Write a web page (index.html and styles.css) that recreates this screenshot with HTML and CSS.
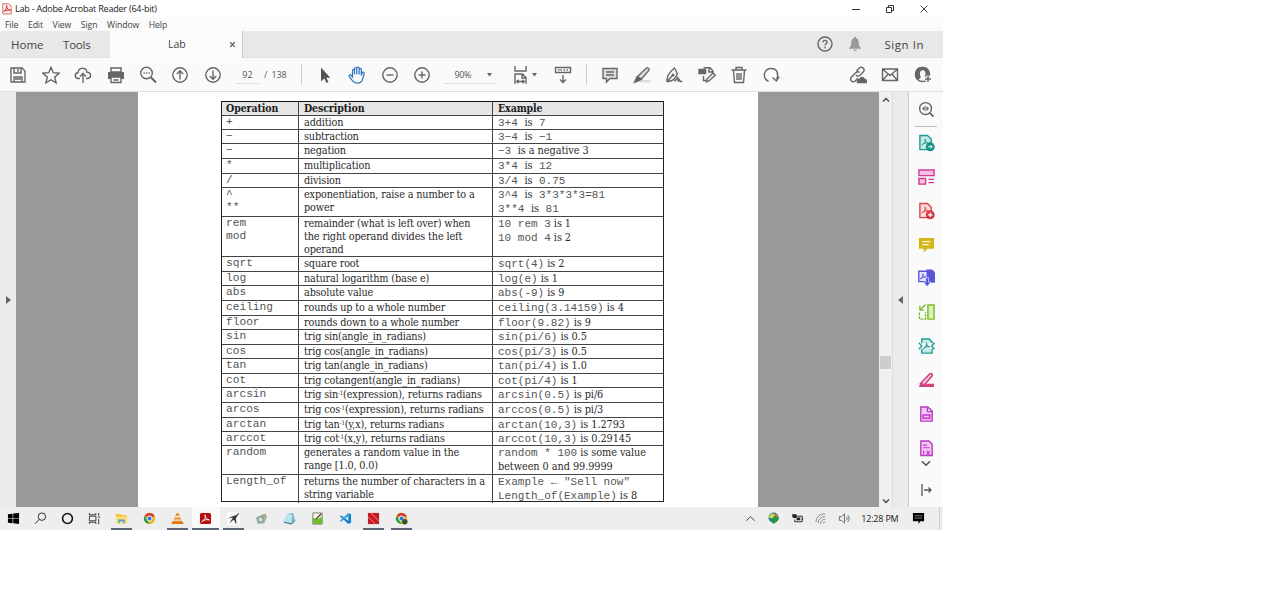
FILE: index.html
```html
<!DOCTYPE html>
<html lang="en">
<head>
<meta charset="utf-8">
<title>Lab - Adobe Acrobat Reader (64-bit)</title>
<link rel="stylesheet" href="styles.css">
</head>
<body>
<div class="window">
  <header class="titlebar">
    <svg class="app-icon" width="10" height="12" viewBox="0 0 10 12"><path d="M.8.8h6L9.200 3v8H.8z" fill="#fff4f4" stroke="#d86a6a"/><path d="M2 8.500C4 7 5 4 4.600 2.500 4.800 5.500 6 7 8.500 7.200 6 6.800 4 7.300 2 8.500z" fill="none" stroke="#d32626"/></svg>
    <span class="title">Lab - Adobe Acrobat Reader (64-bit)</span>
    <div class="controls">
      <svg width="10" height="10" viewBox="0 0 10 10"><path d="M1 5.500h8" stroke="#333"/></svg>
      <svg width="10" height="10" viewBox="0 0 10 10" fill="none" stroke="#333"><path d="M1.500 3.500h5v5h-5zM3.500 3V1.500h5v5H7"/></svg>
      <svg width="10" height="10" viewBox="0 0 10 10" stroke="#333" stroke-width=".9"><path d="M1.500 1.500l7 7m0-7l-7 7"/></svg>
    </div>
  </header>
  <nav class="menubar"><span>File</span><span>Edit</span><span>View</span><span>Sign</span><span>Window</span><span>Help</span></nav>
  <div class="tabs">
    <span class="home">Home</span><span class="tools">Tools</span>
    <div class="tab"><span>Lab</span><svg width="7" height="7" viewBox="0 0 7 7" stroke="#555" stroke-width="1.200"><path d="M1.200 1.200l4.600 4.600m0-4.600L1.200 5.800"/></svg></div>
    <div class="account">
      <svg width="16" height="16" viewBox="0 0 16 16" fill="none" stroke="#666" stroke-width="1.400"><circle cx="8" cy="8" r="7"/><path d="M6 6.300c0-2.600 4-2.600 4 0C10 7.700 8 7.700 8 9.500M8 10.800v1.400"/></svg>
      <svg class="bell" width="14" height="16" viewBox="0 0 14 16" fill="#999"><path d="M7 .8c.8 0 1 .5 1 1.200 2 .7 2.700 2 2.700 4.500 0 3 .5 4 2.300 5.500v.8H1V12c1.800-1.500 2.300-2.500 2.300-5.500C3.300 4 4 2.700 6 2 6 1.300 6.200.8 7 .8zM5 13.800h4c-.5 1.600-3.500 1.600-4 0z"/></svg>
      <span>Sign In</span>
    </div>
  </div>
  <div class="toolbar">
    <div class="group first">
      <svg viewBox="0 0 18 18"><path d="M2 2h11l3 3v11H2zM5 2v5h7V2M5 16v-5h8v5M6 13h6"/><path d="M9 3v3"/></svg>
      <svg viewBox="0 0 18 18"><path d="M9 1.300l2.300 5.400 5.900.5-4.500 3.900 1.400 5.700L9 13.700l-5.100 3.100 1.400-5.700L.8 7.200l5.900-.5z"/></svg>
      <svg viewBox="0 0 18 18"><path d="M6 12.500H4.500C.3 12.500.2 7 4 6.700 4.500 1 12 .9 13 6.200c5 .1 4.600 6.300 0 6.300h-1M9 17V8M6 10.500l3-3 3 3"/></svg>
      <svg viewBox="0 0 18 18"><path d="M4 2h10v4H4zM4 11h10v5.500H4zM6.500 14h5"/><path d="M1 6h16v7h-3v-2H4v2H1z" fill="#666" stroke="none"/></svg>
      <svg viewBox="0 0 18 18"><circle cx="7.500" cy="7" r="5.800"/><path d="M11.800 11.300L17 16.500" stroke-width="2"/><path d="M4.500 7h1.300M7 7h1.200M9.500 7h1.200"/></svg>
      <svg viewBox="0 0 18 18"><circle cx="9" cy="9" r="7.200"/><path d="M9 13.500V5M5.800 8L9 4.800 12.200 8"/></svg>
      <svg viewBox="0 0 18 18"><circle cx="9" cy="9" r="7.200"/><path d="M9 4.500V13M5.800 10L9 13.200l3.200-3.200"/></svg>
    </div>
    <span class="page-field">92</span><span class="page-count">/&nbsp; 138</span>
    <i class="divider"></i>
    <div class="group pointers">
      <svg viewBox="0 0 18 18"><path d="M5 1.500v14l3.300-3 2.200 4.500 2-1-2.200-4.300h4z" fill="#555" stroke="none"/></svg>
      <svg viewBox="0 0 18 18" class="blue"><path d="M4.500 11V4.500c0-1.500 2-1.500 2 0V8.500 2.700c0-1.600 2.300-1.600 2.300 0V8.300 2.200c0-1.600 2.300-1.600 2.300 0V8.500 3.500c0-1.400 2.200-1.400 2.200 0v6l.7-2.500c.5-1.500 2.500-.9 2.200.5l-1.700 6c-.8 2.500-2.500 3.700-5 3.700-2 0-3.700-.7-5-2.600L1.300 10.800c-.9-1.500 1-2.500 2-1.300L5 11.600"/></svg>
      <svg viewBox="0 0 18 18"><circle cx="9" cy="9" r="7.200"/><path d="M5.500 9h7"/></svg>
      <svg viewBox="0 0 18 18"><circle cx="9" cy="9" r="7.200"/><path d="M5.500 9h7M9 5.500v7"/></svg>
    </div>
    <span class="zoom-field">90%<b class="caret"></b></span>
    <svg class="fit" viewBox="0 0 18 18"><path d="M3 0v5h11V0M3 18V8h7.500L14 11.500V18M10 8v4h4M5 15.500h7M6.500 13.800L4.800 15.500l1.700 1.700M10.500 13.800l1.700 1.700-1.700 1.700"/></svg><b class="caret"></b>
    <svg class="keys" viewBox="0 0 18 18"><path d="M1.500 1.500h15v5h-15zM4 4h1.500m1 0H8m1.500 0H11m1.500 0H14M9 9v7.500M6 13.500l3 3 3-3"/></svg>
    <i class="divider"></i>
    <div class="group edit">
      <svg viewBox="0 0 18 18"><path d="M2 2.500h14v10H9l-3.500 3.500v-3.500H2z" fill="#ddd"/><path d="M5 6h8M5 9h8"/></svg>
      <svg viewBox="0 0 18 18"><path d="M8 14h9.500v2.500H6z" fill="#ddd" stroke="none"/><path d="M4.500 10.500L13.500 2c1-.8 3.200.9 2.500 2.200L8.500 13z" fill="#ddd"/><path d="M4 11l4 2.500-2 1-4.500 1.700z" fill="#666"/></svg>
      <svg viewBox="0 0 18 18"><path d="M2 15.500C1.500 11 4 6.500 9.500 2l2.800 5.500C11 13 8 15.300 2 15.500zM2 15.500l5.500-6"/><circle cx="8" cy="9" r=".8"/><path d="M9.500 15.500l3.500-4c.8.500-.7 3.700.5 3.500l1-1.200.8 1.700h2"/></svg>
      <svg viewBox="0 0 18 18"><path d="M5.500 1.700H12L15 5v2M5.500 10v4.500H8M11 2v4h4M8.500 16l.5-3 6-6 2.200 2-6.200 6z"/><path d="M1 3.500h6.500v4H1z" fill="#666"/></svg>
      <svg viewBox="0 0 18 18"><path d="M1.500 4h15M6 3.500v-2h6v2M3.500 4.500l1 12h9l1-12M7 7v7M9 7v7M11 7v7"/></svg>
      <svg viewBox="0 0 18 18"><path d="M6.500 15.300C-.5 12 2 2.500 9.200 2.500c6.300 0 7.800 6 5.300 11"/><path d="M10.500 11.500l4 3.500 2.700-4.500"/></svg>
    </div>
    <div class="group share">
      <svg viewBox="0 0 18 18"><path d="M7.500 5L10 2.300c3-2.800 6.700 1 4.200 3.700L11 9.300c-1.500 1.200-3 1-4-.3M10.500 6.500c-1.200-1-2.700-.7-4 .5L2.500 11c-2.500 2.800 1 6.500 4 3.700L9 12"/><path d="M8.500 16.500c-.3-2.500 1.200-3 2-3 1-3 4.500-2.500 5 0 2 0 2.500 2 1.800 3z" fill="#666"/></svg>
      <svg viewBox="0 0 18 18"><path d="M1.500 3h15v11.500h-15zL9 9.500 16.500 3M1.500 14.500L6.700 8.500M16.500 14.500l-5.200-6"/></svg>
      <svg viewBox="0 0 18 18"><circle cx="8.500" cy="8.500" r="7"/><path d="M3 13C0 8 2 1.500 8.500 1.500c6 0 8 6 5.500 9l-2.300-.5c3-8.500-9-8.500-6 0 .8 1.500.3 2-2.700 3z" fill="#666"/><path d="M14 9.500v7M10.500 13h7" stroke="#fafafa" stroke-width="3.500"/><path d="M14 10v6M11 13h6"/></svg>
    </div>
  </div>
  <main class="workspace">
    <aside class="left-rail"><i class="tri right"></i></aside>
    <section class="canvas">
      <article class="sheet">
        <div class="ops">
          <div class="row head"><p>Operation</p><p>Description</p><p>Example</p></div>
          <div class="row"><code>+</code><p>addition</p><code>3+4 <q>is</q> 7</code></div>
          <div class="row"><code>−</code><p>subtraction</p><code>3−4 <q>is</q> −1</code></div>
          <div class="row r15"><code>−</code><p>negation</p><code>−3 <q>is a negative 3</q></code></div>
          <div class="row r15"><code>*</code><p>multiplication</p><code>3*4 <q>is</q> 12</code></div>
          <div class="row"><code>/</code><p>division</p><code>3/4 <q>is</q> 0.75</code></div>
          <div class="row r28"><code>^<br>**</code><p>exponentiation, raise a number to a<br>power</p><code>3^4 <q>is</q> 3*3*3*3=81<br>3**4 <q>is</q> 81</code></div>
          <div class="row r40"><code>rem<br>mod</code><p>remainder (what is left over) when<br>the right operand divides the left<br>operand</p><code>10 rem 3<q> is 1</q><br>10 mod 4<q> is 2</q></code></div>
          <div class="row r15"><code>sqrt</code><p>square root</p><code>sqrt(4)<q> is 2</q></code></div>
          <div class="row"><code>log</code><p>natural logarithm (base e)</p><code>log(e)<q> is 1</q></code></div>
          <div class="row r15"><code>abs</code><p>absolute value</p><code>abs(-9)<q> is 9</q></code></div>
          <div class="row r15"><code>ceiling</code><p>rounds up to a whole number</p><code>ceiling(3.14159)<q> is 4</q></code></div>
          <div class="row"><code>floor</code><p>rounds down to a whole number</p><code>floor(9.82)<q> is 9</q></code></div>
          <div class="row r15"><code>sin</code><p>trig sin(angle_in_radians)</p><code>sin(pi/6)<q> is 0.5</q></code></div>
          <div class="row"><code>cos</code><p>trig cos(angle_in_radians)</p><code>cos(pi/3)<q> is 0.5</q></code></div>
          <div class="row r15"><code>tan</code><p>trig tan(angle_in_radians)</p><code>tan(pi/4)<q> is 1.0</q></code></div>
          <div class="row"><code>cot</code><p>trig cotangent(angle_in_radians)</p><code>cot(pi/4)<q> is 1</q></code></div>
          <div class="row r15"><code>arcsin</code><p>trig sin<sup>-1</sup>(expression), returns radians</p><code>arcsin(0.5)<q> is pi/6</q></code></div>
          <div class="row r15"><code>arcos</code><p>trig cos<sup>-1</sup>(expression), returns radians</p><code>arccos(0.5)<q> is pi/3</q></code></div>
          <div class="row"><code>arctan</code><p>trig tan<sup>-1</sup>(y,x), returns radians</p><code>arctan(10,3)<q> is 1.2793</q></code></div>
          <div class="row"><code>arccot</code><p>trig cot<sup>-1</sup>(x,y), returns radians</p><code>arccot(10,3)<q> is 0.29145</q></code></div>
          <div class="row r29"><code>random</code><p>generates a random value in the<br>range [1.0, 0.0)</p><code>random * 100<q> is some value<br>between 0 and 99.9999</q></code></div>
          <div class="row r27"><code>Length_of</code><p>returns the number of characters in a<br>string variable</p><code>Example ← "Sell now"<br>Length_of(Example)<q> is 8</q></code></div>
        </div>
      </article>
    </section>
    <div class="scrollbar">
      <svg width="8" height="6" viewBox="0 0 8 6" fill="none" stroke="#444" stroke-width="1.300"><path d="M1 4.500l3-3 3 3"/></svg>
      <i class="thumb"></i>
      <svg width="8" height="6" viewBox="0 0 8 6" fill="none" stroke="#444" stroke-width="1.300"><path d="M1 1.500l3 3 3-3"/></svg>
    </div>
    <aside class="right-rail"><i class="tri left"></i></aside>
    <aside class="tool-pane">
      <svg class="search" viewBox="0 0 18 18" fill="none" stroke="#666" stroke-width="1.500"><circle cx="8" cy="8" r="6.300"/><path d="M12.500 12.500l4 4" stroke-width="2"/><path d="M8 5v6M6.700 6L4.500 8l2.200 2zM9.300 6l2.200 2-2.200 2z" fill="#666" stroke-width=".6"/></svg>
      <svg viewBox="0 0 18 18"><path d="M2 1h8l4 4v11H2z" fill="#c4e8e4" stroke="#269a94" stroke-width="1.500"/><path d="M4 11c3-1 4-4 3.500-6C8 8 9 9 11 9 9 9 6 9 4 11z" fill="none" stroke="#269a94"/><circle cx="13" cy="13" r="4.700" fill="#149089"/><path d="M10.500 13h4.500m-2-2l2 2-2 2" fill="none" stroke="#fff"/></svg>
      <svg viewBox="0 0 18 18" fill="#f7c0e0" stroke="#d33b96" stroke-width="1.500"><path d="M1 1.500h16v6H1zM1 10.500h7v6H1z"/><path d="M11 11.500h6M11 15h6" stroke-width="1.200"/></svg>
      <svg viewBox="0 0 18 18"><path d="M2 1h8l4 4v11H2z" fill="#fbdada" stroke="#d64550" stroke-width="1.500"/><path d="M4 11c3-1 4-4 3.500-6C8 8 9 9 11 9 9 9 6 9 4 11z" fill="none" stroke="#d64550"/><circle cx="13" cy="13" r="4.700" fill="#d43442"/><path d="M10.500 13h5M13 10.500v5" stroke="#fff" stroke-width="1.300"/></svg>
      <svg viewBox="0 0 18 18"><path d="M1 1.500h16v11.500H10L6 17v-4H1z" fill="#d4b51a"/><path d="M4.500 5.500h9M4.500 8.500h7" stroke="#fff7c8" stroke-width="1.300"/></svg>
      <svg viewBox="0 0 18 18"><path d="M9 0h6l3 3v11H9z" fill="#5955d9"/><path d="M.8 1.800h9v11h-9z" fill="#e3e2ff" stroke="#5955d9" stroke-width="1.500"/><path d="M2.500 10c3-2 3-4 2.700-5.500C5.500 7 6.500 8 8.500 8 6 8 4 9 2.500 10z" fill="none" stroke="#5955d9"/><path d="M8.200 8.500h3v5h2.500L9.700 18l-4-4.500h2.500z" fill="#5955d9" stroke="#fff" stroke-width=".6"/></svg>
      <svg viewBox="0 0 18 18" fill="none" stroke="#79bd2d" stroke-width="1.500"><path d="M10.500 1.500h6.500v15h-6.500z" fill="#d8f3b4"/><path d="M8 1L2.500 6.500M2 2.500V7h4.500"/><path d="M1.500 9.500v7H8V9" stroke-dasharray="3 1"/></svg>
      <svg viewBox="0 0 18 18" fill="none" stroke="#269a94" stroke-width="1.500"><path d="M4 6V1.500h8L15 5v1M4 12v4.500h11V12" fill="#c4e8e4"/><path d="M1 5.500L4 9l-3 3.500M17.500 5.500l-3 3.500 3 3.500"/><path d="M5.500 12c3-2 4-4 3.500-6.500 0 3 2 4 4 4.500-2-.5-5-.5-7.500 2z" stroke-width="1.100"/></svg>
      <svg viewBox="0 0 18 18"><path d="M2.500 13L12.500 2.500c1.500-1 3.500.5 2.500 2L7 14z" fill="#f8cbdc" stroke="#ce397b" stroke-width="1.500"/><path d="M1 16l2.500-4L7 14.500l3-1.500h7v3.500H1z" fill="#d1417f"/></svg>
      <svg viewBox="0 0 18 18" fill="#f5c9f5" stroke="#bb38c5" stroke-width="1.500"><path d="M3 1.500h7.500L15 6v10.500H3zM10 2v4.500h4.500"/><path d="M5.500 10h7v3.500h-7z"/></svg>
      <svg class="last" viewBox="0 0 18 18" fill="#f5c9f5" stroke="#bb38c5" stroke-width="1.500"><path d="M3 17V1.500h8.500L15 5v12z"/><path d="M5.500 6h4M5.500 8.700h7M6 12v4M9 12l3.500 4m0-4L9 16" stroke-width="1.200"/></svg>
      <svg class="more" viewBox="0 0 12 7" fill="none" stroke="#555" stroke-width="1.600"><path d="M2 1.200l4 4 4-4"/></svg>
      <svg class="collapse" viewBox="0 0 14 14" fill="none" stroke="#555" stroke-width="1.300"><path d="M3 1v12M5 7h7M9.500 4.500L12 7l-2.500 2.500"/></svg>
    </aside>
  </main>
  <footer class="taskbar">
    <div class="apps">
      <span><svg viewBox="0 0 14 14"><path d="M1 2.500l5-.7v4.800H1zM6.700 1.700L13 1v5.600H6.700zM1 7.400h5v4.800l-5-.7zM6.700 7.400H13V13l-6.300-.8z" fill="#000"/></svg></span>
      <span><svg viewBox="0 0 14 14" fill="none" stroke="#222"><circle cx="8.500" cy="5" r="4"/><path d="M5.700 8L1 12.700"/></svg></span>
      <span><svg viewBox="0 0 14 14"><circle cx="7" cy="7" r="5.300" fill="none" stroke="#111" stroke-width="1.700"/></svg></span>
      <span><svg viewBox="0 0 14 14" fill="none" stroke="#333"><path d="M1.500 1v2h7V1M1.500 4.500h7v5h-7zM1.500 13v-2h7v2M11.500 1v3M11.500 7.500V13M10.500 5.500h2.500"/></svg></span>
      <span class="open"><svg viewBox="0 0 14 14"><path d="M1 2h5l1 1.500h6V12H1z" fill="#f4c244"/><path d="M1 5h12v7H1z" fill="#fbdd79"/><path d="M3.500 12V8h7v4H9v-2H5v2z" fill="#4a9ed3"/></svg></span>
      <span><svg viewBox="0 0 14 14"><circle cx="7" cy="7" r="6" fill="#e8b91e"/><path d="M7 7L1.800 4A6 6 0 0 1 12.700 5H7z" fill="#db3b2e"/><path d="M1.800 4L7 13A6 6 0 0 1 1.800 4z" fill="#259b4c"/><circle cx="7" cy="7" r="2.700" fill="#3277df" stroke="#fff"/></svg></span>
      <span class="open"><svg viewBox="0 0 14 14"><path d="M6 1h2l4 10H2z" fill="#ef861e"/><path d="M5 4h4l.8 2H4.200zM3.500 8h7l.7 1.500H2.700z" fill="#f3eee4"/><path d="M1 10.500h12l.5 2.500H.5z" fill="#d97818"/></svg></span>
      <span class="open active"><svg viewBox="0 0 14 14"><rect x="1" y="1" width="12" height="12" rx="2" fill="#b50e0b"/><path d="M3 10.500C6 8.500 7.500 5.500 6.500 3c0 3 2 5 4.500 5.500-3-.7-6 0-8 2z" fill="none" stroke="#fff"/></svg></span>
      <span class="open"><svg viewBox="0 0 14 14"><path d="M0 0h14v14H0z" fill="#fafafa"/><path d="M1 7l5-2.500 4-1L12.500 1l.5 1-2.500 3-1 2 .8 5.500h-1L7.500 8 2.500 12l4-6z" fill="#333"/></svg></span>
      <span><svg viewBox="0 0 14 14"><path d="M1 6l9-4 3 3-3 7-7 1z" fill="#9db3a2"/><circle cx="6" cy="8" r="3" fill="#d5dfd7" stroke="#6c8494"/><path d="M7 7l5-5" stroke="#b38a4c"/></svg></span>
      <span><svg viewBox="0 0 14 14"><path d="M5 2l6-1 2 8-4 4-8-2z" fill="#78b8cf"/><path d="M5 2l5 1-1 9-8-2z" fill="#b9e3ef"/><path d="M1 11l8 2 4-4" fill="none" stroke="#41636e"/></svg></span>
      <span><svg viewBox="0 0 14 14"><path d="M2 1h10v12H2z" fill="#f3f1d8" stroke="#778"/><path d="M2 6l4 2 6-3v8H2z" fill="#72bd29"/><path d="M5 8l6-6" stroke="#333" stroke-width="1.300"/></svg></span>
      <span><svg viewBox="0 0 14 14"><path d="M10 1l3 1.300v9.400L10 13 1 4.500l1.200-1L10 9.300z" fill="#1684cb"/><path d="M10 1v3.700L2.200 10.500 1 9.500z" fill="#2aa2e7"/></svg></span>
      <span class="open"><svg viewBox="0 0 14 14"><path d="M1 1h12v12H1z" fill="#c61920"/><path d="M4 1l9 9M1 5l8 8" stroke="#f1b6b6" stroke-width=".8"/></svg></span>
      <span class="open"><svg viewBox="0 0 14 14"><circle cx="7" cy="7" r="6" fill="#e8b91e"/><path d="M7 7L1.800 4A6 6 0 0 1 12.700 5H7z" fill="#db3b2e"/><path d="M1.800 4L7 13A6 6 0 0 1 1.800 4z" fill="#259b4c"/><circle cx="7" cy="7" r="2.700" fill="#3277df" stroke="#fff"/><circle cx="10.500" cy="10.500" r="3" fill="#285c2c"/></svg></span>
    </div>
    <div class="tray">
      <svg viewBox="0 0 14 14" fill="none" stroke="#333"><path d="M2.500 9.500L7 5l4.500 4.500"/></svg>
      <svg viewBox="0 0 14 14"><circle cx="7" cy="6" r="5.500" fill="#2c78b9"/><path d="M1 6l4-5 4 2-3 4z" fill="#c8da48"/><path d="M7 13L3 8h2l4-4 4 3-2 3z" fill="#259a32"/><path d="M8 1l4 2-2 3z" fill="#e37722"/></svg>
      <svg viewBox="0 0 14 14"><path d="M5 4.500h7v6H4V8M12.500 6.500v2" fill="none" stroke="#222"/><path d="M1 2.500h5v4H2zM6 6h4v3H6z" fill="#222"/></svg>
      <svg viewBox="0 0 14 14" fill="none" stroke="#777" stroke-width=".9"><path d="M2 11A9 9 0 0 1 12 2M4.500 12A7 7 0 0 1 12 5M7 12.500A5 5 0 0 1 12 8M9.500 12.500A3 3 0 0 1 12 10.500"/></svg>
      <svg viewBox="0 0 14 14" fill="none" stroke="#555" stroke-width=".9"><path d="M1.500 5H4l3-3v10L4 9H1.500zM9 5c1 1 1 3 0 4M10.500 3.500c2 2 2 5 0 7"/></svg>
      <time>12:28 PM</time>
      <svg viewBox="0 0 14 14"><path d="M1 1h12v9H9l-2 3v-3H1z" fill="#000"/><path d="M3 4h8M3 6.500h8" stroke="#bbb" stroke-width=".7"/></svg>
    </div>
  </footer>
</div>
</body>
</html>
```
FILE: styles.css
```css
* { box-sizing: border-box; }
body { margin: 0; background: #fff; overflow: hidden; font-family: "Open Sans", "Noto Sans", sans-serif; color: #444; }
svg { display: block; flex: none; }
.window { width: 943px; height: 530px; display: flex; flex-direction: column; }

.titlebar { height: 17px; display: flex; align-items: center; padding: 0 14px 0 2px; gap: 3px; }
.title { font-size: 9px; color: #222; white-space: nowrap; letter-spacing: -.21px; }
.controls { margin-left: auto; display: flex; gap: 24px; }
.menubar { height: 14px; padding-top: 1px; background: #fafafa; display: flex; align-items: center; gap: 9.700px; padding-left: 5px; font-size: 8.700px; letter-spacing: -.12px; }

.tabs { height: 27px; background: #e8e8e8; display: flex; align-items: center; font-size: 11.500px; border-bottom: 1px solid #e0e0e0; white-space: nowrap; }
.home { width: 52px; padding-left: 11px; }
.tools { width: 58px; padding-left: 11px; letter-spacing: -.2px; }
.tab { width: 133px; height: 27px; background: #fbfbfb; border-right: 1px solid #c6c6c6; display: flex; align-items: center; padding-left: 58px; font-size: 10.500px; }
.tab svg { margin-left: auto; margin-right: 6px; }
.account { margin-left: auto; padding-right: 19px; display: flex; align-items: center; letter-spacing: .55px; }
.bell { margin: 0 22px 0 15px; }

.toolbar { height: 34px; background: #fafafa; border-bottom: 1px solid #ddd; display: flex; align-items: center; color: #555; font-size: 9px; }
.toolbar svg { width: 18px; height: 18px; fill: none; stroke: #666; stroke-width: 1.400; }
.toolbar svg.blue { stroke: #2b73c0; stroke-width: 1.200; }
.group { display: flex; }
.group svg { margin: 0 7.200px; }
.first { margin-left: 2.300px; }
.page-field { width: 23px; height: 19px; line-height: 19px; margin-left: 7px; border-bottom: 1px solid #ddd; text-align: center; }
.page-count { width: 38px; padding-left: 5px; white-space: nowrap; letter-spacing: -.15px; }
.divider { width: 1px; height: 21px; background: #ccc; margin-left: 4px; }
.pointers { margin-left: 7px; }
.zoom-field { width: 53px; height: 19px; line-height: 19px; border-bottom: 1px solid #ddd; margin-left: 6px; padding: 0 5px 0 10px; display: flex; align-items: center; justify-content: space-between; letter-spacing: -.3px; }
.caret { width: 5px; border: 2.500px solid transparent; border-top: 3px solid #666; border-bottom: 0; }
.toolbar .fit { margin: 0 2px 0 15px; }
.toolbar .keys { margin: 0 10px 0 17px; }
.edit { margin-left: 6px; }
.share { margin-left: auto; margin-right: 4px; }

.workspace { height: 415px; display: flex; }
.left-rail { width: 16px; background: #ebebeb; display: flex; align-items: center; justify-content: center; }
.tri { border: 4px solid transparent; }
.tri.right { border-left: 5px solid #666; border-right: 0; }
.tri.left { border-right: 5px solid #666; border-left: 0; }
.canvas { width: 863px; background: #999; padding-left: 122px; }
.sheet { width: 620px; height: 415px; background: #fff; padding: 9px 0 0 83px; }
.ops { width: 443px; border: 1px solid #222; border-top-width: 0; color: #2a2a2a; }
.row { display: grid; grid-template-columns: 76px 194px 1fr; height: 14px; border-top: 1px solid #444; }
.row > * { margin: 0; padding: 0 0 0 5px; white-space: nowrap; line-height: 13px; font-size: 10.800px; letter-spacing: -.15px; font-family: "DejaVu Serif Condensed", "DejaVu Serif", serif; font-stretch: condensed; }
.row > * + * { border-left: 1px solid #444; }
.row > code { font: 11.200px/13px "Liberation Mono", monospace; color: #555; letter-spacing: 0; padding-left: 4px; }
.row > p + code { font-size: 11px; line-height: 14px; padding-left: 5px; }
.row.head { background: #e6e6e6; border-top-color: #111; }
.row.head > p { font-weight: bold; font-size: 10.500px; letter-spacing: -.1px; color: #1b1b1b; }
.row.head > p:first-child { padding-left: 4px; }
.r15.row { height: 15px; }
.r28.row { height: 29px; }
.r40.row { height: 40px; }
.r29.row { height: 29px; }
.r27.row { height: 27px; }
.row q { font: 10.800px/1 "DejaVu Serif Condensed", "DejaVu Serif", serif; font-stretch: condensed; letter-spacing: -.05px; color: #2a2a2a; quotes: none; }
sup { font-size: 6px; line-height: 0; vertical-align: 3px; }

.scrollbar { width: 13px; background: #f0f0f0; display: flex; flex-direction: column; align-items: center; padding: 5px 0 3px; }
.thumb { width: 11px; height: 13px; background: #cdcdcd; margin: 253px 0 auto; }
.right-rail { width: 17px; background: #ebebeb; border-right: 1px solid #ccc; border-left: 1px solid #ddd; display: flex; align-items: center; justify-content: center; }
.tool-pane { width: 34px; background: #fafafa; display: flex; flex-direction: column; align-items: center; gap: 15.900px; }
.tool-pane svg { width: 17px; height: 18px; }
.tool-pane svg.search { width: 22px; height: 35px; padding: 9px 2px 8px 3px; border-bottom: 1px solid #bbb; margin-bottom: -9px; }
.tool-pane svg.last { margin-bottom: -13px; }
.tool-pane svg.more { width: 12px; height: 7px; }
.tool-pane svg.collapse { width: 14px; height: 14px; }

.taskbar { height: 23px; background: #eee; display: flex; justify-content: space-between; }
.apps { display: flex; }
.apps span { width: 28px; height: 23px; display: flex; justify-content: center; align-items: center; }
.apps span:nth-child(-n+4) { width: 26.900px; }
.apps svg, .tray svg { width: 13px; height: 13px; }
.open { background: linear-gradient(#5b6478, #5b6478) center bottom / 21px 2px no-repeat; }
.open.active { background: linear-gradient(#5b6478, #5b6478) center bottom / 27px 2px no-repeat, #fafafa; }
.tray { display: flex; align-items: center; gap: 10.500px; padding-right: 14px; margin-right: 3px; font-size: 9px; color: #222; border-right: 1px solid #ccc; }
.tray time { letter-spacing: -.2px; white-space: nowrap; }
.tray time + svg { margin-left: 3px; }
```
